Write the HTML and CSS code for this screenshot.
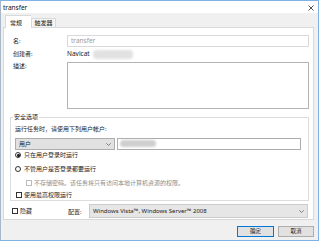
FILE: index.html
```html
<!DOCTYPE html>
<html>
<head>
<meta charset="utf-8">
<link rel="stylesheet" href="styles.css">
</head>
<body>
<div class="window">
  <div class="titlebar">
    <span class="title">transfer</span>
    <svg class="close" width="6" height="6" viewBox="0 0 6 6"><path d="M0.5 0.5L5.5 5.5M5.5 0.5L0.5 5.5" stroke="#404040" stroke-width="0.9"/></svg>
  </div>
  <div class="tabs">
    <div class="tab active">常规</div>
    <div class="tab">触发器</div>
  </div>
  <div class="panel">
    <div class="row r1">
      <div class="lbl">名:</div>
      <div class="input name">transfer</div>
    </div>
    <div class="row r2">
      <div class="lbl">创建者:</div>
      <div class="val">Navicat <span class="blur b1"></span></div>
    </div>
    <div class="row r3">
      <div class="lbl">描述:</div>
      <div class="input desc"></div>
    </div>
    <div class="group">
      <span class="legend">安全选项</span>
      <div class="g-text">运行任务时，请使用下列用户帐户:</div>
      <div class="g-user">
        <div class="combo">用户<svg class="chev" width="5" height="3" viewBox="0 0 5 3"><path d="M0.3 0.3L2.5 2.5L4.7 0.3" fill="none" stroke="#555" stroke-width="0.7"/></svg></div>
        <div class="input acct"><span class="blur b2"></span></div>
      </div>
      <div class="opt o1"><span class="radio on"></span>只在用户登录时运行</div>
      <div class="opt o2"><span class="radio"></span>不管用户是否登录都要运行</div>
      <div class="opt o3 disabled"><span class="check dis"></span>不存储密码。该任务将只有访问本地计算机资源的权限。</div>
      <div class="opt o4"><span class="check"></span>使用最高权限运行</div>
    </div>
    <div class="bottom">
      <div class="opt hide"><span class="check"></span>隐藏</div>
      <div class="cfg-lbl">配置:</div>
      <div class="cfg">Windows Vista™, Windows Server™ 2008<svg class="chev" width="5" height="3" viewBox="0 0 5 3"><path d="M0.3 0.3L2.5 2.5L4.7 0.3" fill="none" stroke="#555" stroke-width="0.7"/></svg></div>
    </div>
  </div>
  <div class="buttons">
    <div class="btn default">确定</div>
    <div class="btn">取消</div>
  </div>
</div>
</body>
</html>
```

FILE: styles.css
```css
* { box-sizing: border-box; }
html, body { margin: 0; padding: 0; background: #ffffff; }
body {
  font-family: "Noto Sans", "Noto Sans CJK SC", sans-serif;
  font-size: 6px;
  color: #1a1a1a;
}
.window {
  width: 319px;
  height: 241px;
  border: 1px solid #7fb1e5;
  border-left-color: #a9b8c8;
  background: #f0f0f0;
  display: flex;
  flex-direction: column;
}
.titlebar {
  height: 12px;
  background: #ffffff;
  display: flex;
  align-items: center;
  justify-content: space-between;
  padding: 1px 4px 0 2px;
}
.title { font-size: 6.5px; line-height: 10px; color: #111; }
.close { display: block; }
.tabs {
  height: 14px;
  display: flex;
  align-items: flex-end;
  padding-left: 4px;
}
.tab {
  height: 9px;
  line-height: 8px;
  border: 1px solid #d9d9d9;
  border-bottom: none;
  background: #f6f6f6;
  font-size: 6px;
  white-space: nowrap;
  text-align: center;
}
.tab.active {
  height: 13px;
  width: 26px;
  line-height: 14px;
  text-align: left;
  padding-left: 4px;
  background: #ffffff;
  border-right: none;
  margin-bottom: -1px;
  position: relative;
  z-index: 1;
}
.tab:not(.active) { width: 25px; }
.panel {
  margin-left: 2px;
  width: 311px;
  height: 193px;
  background: #ffffff;
  border: 1px solid #d9d9d9;
  display: flex;
  flex-direction: column;
}
.row { display: flex; padding-left: 9px; }
.lbl { width: 54px; line-height: 10px; }
.r1 { margin-top: 7px; height: 12px; align-items: center; }
.r2 { margin-top: 2px; height: 10px; align-items: center; }
.r3 { margin-top: 3px; height: 47px; }
.r3 .lbl { margin-top: -1px; }
.input {
  background: #ffffff;
  border: 1px solid #adadad;
}
.name {
  width: 242px;
  height: 12px;
  border-color: #d9d9d9;
  color: #9a9a9a;
  font-size: 6.5px;
  line-height: 10px;
  padding-left: 3px;
}
.desc { width: 242px; height: 47px; border-color: #b4b4b4; }
.val { line-height: 10px; display: flex; align-items: center; gap: 3px; font-size: 6.5px; }
.blur {
  display: inline-block;
  background: #d9d9d9;
  border-radius: 4px;
  filter: blur(1.2px);
}
.b1 { width: 40px; height: 9px; background: #e2e2e2; }
.b2 { width: 36px; height: 7px; margin: 1px 0 0 2px; background: #cfcfcf; }
.group {
  position: relative;
  margin: 8px 0 0 6px;
  width: 299px;
  height: 84px;
  border: 1px solid #dcdcdc;
  display: flex;
  flex-direction: column;
}
.legend {
  position: absolute;
  top: -5px;
  left: 2px;
  padding: 0 1px;
  background: #ffffff;
  line-height: 8px;
}
.g-text { margin: 7px 0 0 4px; line-height: 8px; }
.g-user { display: flex; margin: 5px 0 0 4px; gap: 2px; height: 12px; }
.combo {
  width: 100px;
  height: 12px;
  background: #e1e1e1;
  border: 1px solid #adadad;
  line-height: 10px;
  padding: 0 3px 0 3px;
  display: flex;
  align-items: center;
  justify-content: space-between;
}
.acct { width: 184px; height: 12px; }
.opt { display: flex; align-items: center; height: 8px; line-height: 8px; white-space: nowrap; }
.o1 { margin: 1px 0 0 4px; }
.o2 { margin: 6px 0 0 4px; }
.o3 { margin: 6px 0 0 15px; color: #8c8c8c; }
.o4 { margin: 4px 0 0 5px; }
.radio {
  width: 6px; height: 6px;
  border: 0.8px solid #333;
  border-radius: 50%;
  margin-right: 3px;
  position: relative;
  flex: none;
}
.radio.on::after {
  content: "";
  position: absolute;
  left: 1.2px; top: 1.2px;
  width: 2.4px; height: 2.4px;
  border-radius: 50%;
  background: #222;
}
.check {
  width: 6px; height: 6px;
  border: 0.8px solid #333;
  margin-right: 2px;
  flex: none;
}
.check.dis { border-color: #bcbcbc; }
.bottom {
  display: flex;
  align-items: center;
  margin-top: 3px;
  height: 14px;
}
.hide { margin-left: 8px; width: 56px; }
.cfg-lbl { width: 21px; }
.cfg {
  width: 219px;
  height: 14px;
  background: #e6e6e6;
  border: 1px solid #cccccc;
  padding: 0 3px 0 3px;
  display: flex;
  align-items: center;
  justify-content: space-between;
  font-size: 6px;
  color: #222;
}
.buttons {
  display: flex;
  justify-content: flex-end;
  gap: 4px;
  margin-top: 6px;
  padding-right: 4px;
}
.btn {
  width: 36px;
  height: 11px;
  background: #e1e1e1;
  border: 1px solid #adadad;
  text-align: center;
  line-height: 9px;
  font-size: 5.5px;
}
.btn.default { width: 37px; border-color: #0078d7; }
```
